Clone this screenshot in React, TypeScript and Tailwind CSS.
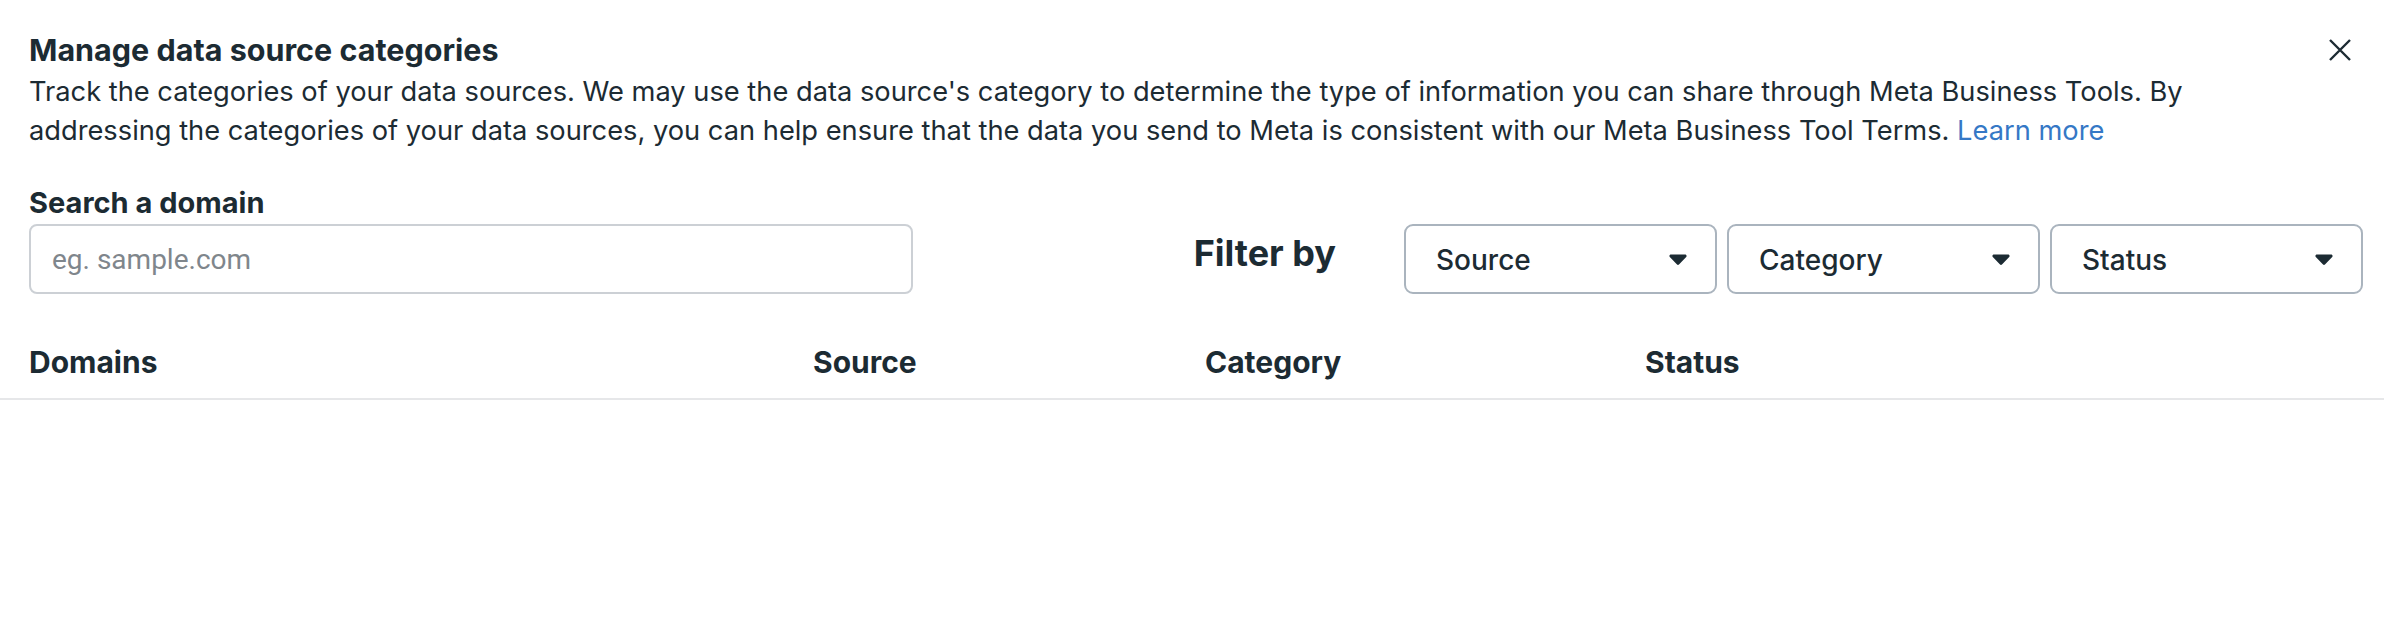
import { useState } from "react";

const heading = "font-['Inter',sans-serif]";
const body = "font-['Roboto',sans-serif]";

function Caret() {
  return (
    <svg width="18" height="11" viewBox="0 0 18 11" aria-hidden>
      <path d="M2 0.5h14c1.4 0 2.1 1.6 1.2 2.6l-7 7.2a1.6 1.6 0 0 1-2.4 0l-7-7.2C-0.1 2.1 0.6 0.5 2 0.5z" fill="#1c2b33" />
    </svg>
  );
}

function FilterSelect({ label }: { label: string }) {
  return (
    <button
      type="button"
      className={`flex h-[70px] w-[313px] items-center justify-between rounded-[9px] border-2 border-[#aab4be] bg-white pl-[30px] pr-[28px] text-[28px] font-medium text-[#1c2b33] ${heading}`}
    >
      <span className="mt-[2px]">{label}</span>
      <Caret />
    </button>
  );
}

export default function App() {
  const [query, setQuery] = useState("");

  return (
    <div className="h-[644px] w-[2384px] bg-white text-[#1c2b33]">
      {/* Header: title, description, close */}
      <div className="flex items-start justify-between pl-[29px] pr-[33px] pt-[32px]">
        <div>
          <h1 className={`text-[30.5px] font-bold leading-[35px] ${heading}`}>Manage data source categories</h1>
          <p className={`mt-[5px] whitespace-nowrap text-[27.25px] leading-[39px] ${heading}`}>
            Track the categories of your data sources. We may use the data source's category to determine the type of
            information you can share through Meta Business Tools. By
            <br />
            addressing the categories of your data sources, you can help ensure that the data you send to Meta is
            consistent with our Meta Business Tool Terms.{" "}
            <a href="#" className="text-[#3578c6]">
              Learn more
            </a>
          </p>
        </div>
        <button type="button" className="mt-[7px] text-[#1c2b33]" aria-label="Close">
          <svg width="22" height="22" viewBox="0 0 22 22">
            <path d="M1 1L21 21M21 1L1 21" stroke="currentColor" strokeWidth="2.4" />
          </svg>
        </button>
      </div>

      {/* Search + filters */}
      <div className="mt-[36px] flex items-end pl-[29px] pr-[21px]">
        <div className="w-[884px]">
          <label className={`block text-[29px] font-bold leading-[34px] ${heading}`}>Search a domain</label>
          <input
            value={query}
            onChange={(e) => setQuery(e.target.value)}
            placeholder="eg. sample.com"
            className={`mt-[4px] h-[70px] w-full rounded-[8px] border-2 border-[#ccd0d5] px-[21px] text-[28px] outline-none placeholder:text-[#7f868c] ${body}`}
          />
        </div>
        <div className="ml-auto flex items-center">
          <span className={`mb-[12px] mr-[68px] text-[36px] font-bold leading-[44px] ${heading}`}>Filter by</span>
          <div className="flex gap-[10px]">
            <FilterSelect label="Source" />
            <FilterSelect label="Category" />
            <FilterSelect label="Status" />
          </div>
        </div>
      </div>

      {/* Table header */}
      <div
        className={`mt-[50px] grid grid-cols-[784px_392px_440px_1fr] border-b-2 border-[#e6e7e9] pb-[18px] pl-[29px] text-[30px] font-bold leading-[36px] ${heading}`}
      >
        <div>Domains</div>
        <div>Source</div>
        <div>Category</div>
        <div>Status</div>
      </div>
    </div>
  );
}
